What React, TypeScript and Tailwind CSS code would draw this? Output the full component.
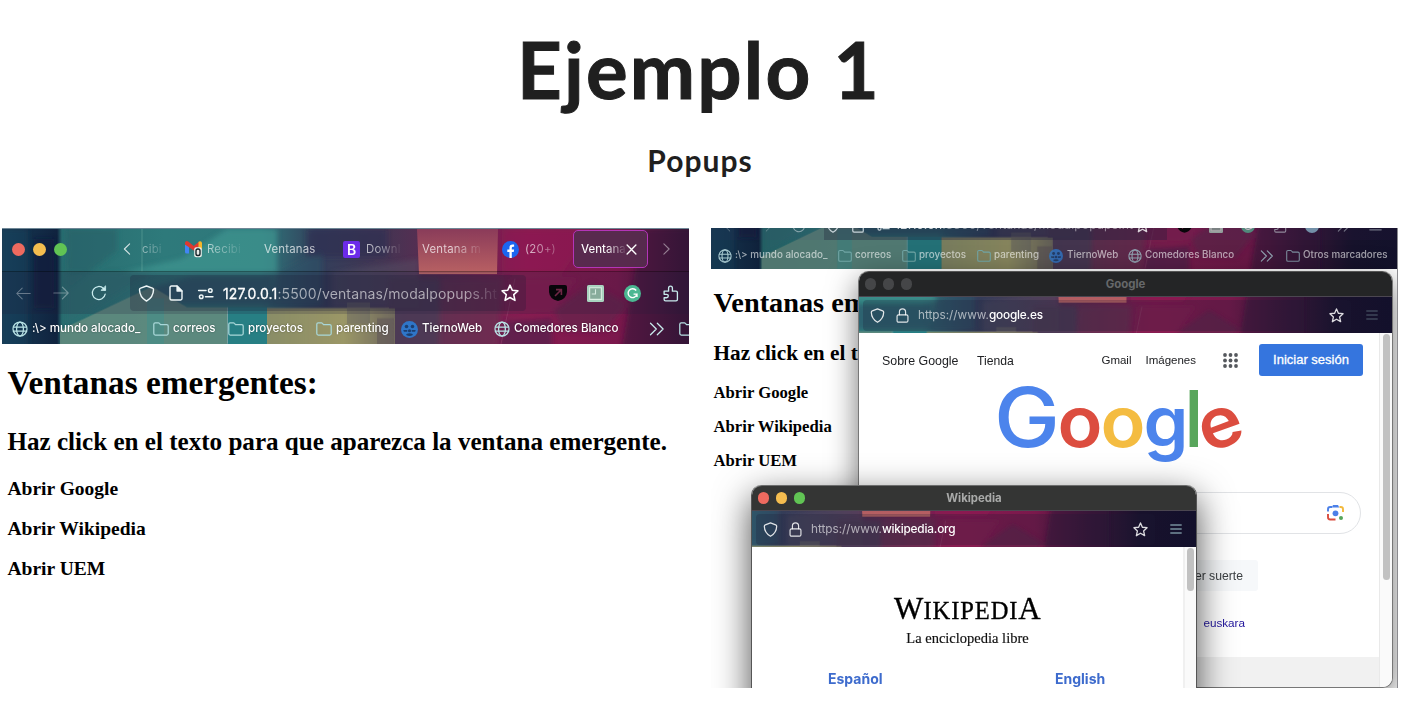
import React from "react";

type IconProps = { className?: string };

const inter = "font-['Inter',sans-serif]";

/* Painted wallpaper behind the browser chrome; `view` selects the visible part. */
function Wallpaper({ view, id }: { view: string; id: string }) {
  return (
    <svg className="absolute inset-0 h-full w-full" viewBox={view} preserveAspectRatio="none" aria-hidden="true">
      <defs>
        <linearGradient id={id + "base"} x1="0" x2="810" y1="0" y2="0" gradientUnits="userSpaceOnUse">
          <stop offset="0" stopColor="#173b55" />
          <stop offset=".068" stopColor="#10233f" />
          <stop offset=".074" stopColor="#286c6f" />
          <stop offset=".2" stopColor="#2e7a7b" />
          <stop offset=".32" stopColor="#2f777b" />
          <stop offset=".39" stopColor="#333f5b" />
          <stop offset=".47" stopColor="#433553" />
          <stop offset=".58" stopColor="#6f2450" />
          <stop offset=".65" stopColor="#861b50" />
          <stop offset=".76" stopColor="#7b184c" />
          <stop offset=".84" stopColor="#3c1538" />
          <stop offset=".91" stopColor="#18112c" />
          <stop offset="1" stopColor="#12102b" />
        </linearGradient>
        <linearGradient id={id + "olive"} x1="0" x2="1" y1="0" y2="0">
          <stop offset="0" stopColor="#8f8f66" />
          <stop offset=".6" stopColor="#a09c68" />
          <stop offset="1" stopColor="#716b5d" />
        </linearGradient>
        <linearGradient id={id + "coral"} x1="0" x2="0" y1="0" y2="1">
          <stop offset="0" stopColor="#8c3d5a" />
          <stop offset="1" stopColor="#bd6564" />
        </linearGradient>
        <filter id={id + "soft"} x="-10%" y="-10%" width="120%" height="120%">
          <feGaussianBlur stdDeviation="2.6" />
        </filter>
        <filter id={id + "edge"} x="-10%" y="-10%" width="120%" height="120%">
          <feGaussianBlur stdDeviation=".7" />
        </filter>
      </defs>
      <rect x="-10" y="-10" width="840" height="140" fill={"url(#" + id + "base)"} />
      <g filter={"url(#" + id + "soft)"}>
        <path d="M0 0H26V130H0Z" fill="#19445f" opacity=".45" />
        <path d="M32 10H52V80H32Z" fill="#0e1d3b" opacity=".7" />
        <path d="M64 0H115V22L66 60Z" fill="#245f68" opacity=".55" />
        <path d="M225 0H275V44H120L180 30Z" fill="#3f9690" opacity=".7" />
        <path d="M150 44L100 75 64 98V44Z" fill="#2c6c70" opacity=".6" />
        <path d="M145 60V76H270V48H190Z" fill="#2c5c6c" opacity=".75" />
        <path d="M320 22V78H268L276 44Z" fill="#2f5468" opacity=".6" />
        <path d="M305 0H385V28H305Z" fill="#2f3153" opacity=".7" />
        <path d="M330 44L417 30V80H330Z" fill="#575667" opacity=".4" />
        <path d="M387 50H438V125H387Z" fill="#4c3c55" opacity=".9" />
        <path d="M440 50H500L495 125H435Z" fill="#683553" opacity=".55" />
        <path d="M500 0H590L560 45H500Z" fill="#951b53" opacity=".45" />
        <path d="M508 50H575L550 85 504 88Z" fill="#8a1b51" opacity=".6" />
        <path d="M500 94L550 90V125H497Z" fill="#5a234d" opacity=".8" />
        <path d="M590 54L625 76 604 103H560L552 82Z" fill="#5c244a" opacity=".55" />
        <path d="M640 0H700V120H620Z" fill="#32153a" opacity=".5" />
      </g>
      <g filter={"url(#" + id + "edge)"}>
        <path d="M66 98L150 58 185 79H225V120H58V102Z" fill="#688d80" opacity=".8" />
        <path d="M145 70H162V120H145Z" fill="#3f908b" opacity=".5" />
        <path d="M226 79H265V125H226Z" fill="#297f85" opacity=".95" />
        <rect x="265" y="80" width="128" height="40" fill={"url(#" + id + "olive)"} opacity=".95" />
        <path d="M345 74H368V96H345Z" fill="#6a6762" opacity=".5" />
        <path d="M375 90H392V120H375Z" fill="#5e5457" opacity=".55" />
      </g>
      <path d="M415 0H496L495 45.500H417Z" fill={"url(#" + id + "coral)"} opacity=".95" />
      <path d="M417 45H495" stroke="#d37b70" opacity=".6" />
      <path d="M140 0V43" stroke="#7db9ad" opacity=".4" />
      <path d="M225.500 79V116" stroke="#b3c5c3" opacity=".55" />
      <path d="M265 79.500H387" stroke="#bdb682" opacity=".35" />
      <path d="M513 50 499 116" stroke="#a3577c" opacity=".4" />
    </svg>
  );
}

const Svg = ({ className = "", children, box = "0 0 16 16" }: IconProps & { children: React.ReactNode; box?: string }) => (
  <svg className={"block shrink-0 " + className} viewBox={box} fill="none" stroke="currentColor" strokeWidth="1.25" strokeLinecap="round" strokeLinejoin="round">
    {children}
  </svg>
);

const GlobeIcon = ({ className }: IconProps) => (
  <Svg className={className}>
    <circle cx="8" cy="8" r="7" />
    <ellipse cx="8" cy="8" rx="3.4" ry="7" />
    <path d="M1.4 6H14.6M1.4 10.2H14.6" />
  </Svg>
);
const FolderIcon = ({ className }: IconProps) => (
  <Svg className={className}>
    <path d="M.8 3.2Q.8 1.8 2.2 1.8H5.4Q6 1.8 6.4 2.3L7.5 3.6H13.7Q15.2 3.6 15.2 5V12.5Q15.2 14 13.7 14H2.3Q.8 14 .8 12.5Z" />
  </Svg>
);
const ShieldIcon = ({ className }: IconProps) => (
  <Svg className={className}>
    <path d="M8 .9 13.5 3Q14.6 3.4 14.6 4.5 14.4 11.6 8 15.2 1.6 11.6 1.4 4.5 1.4 3.4 2.5 3Z" strokeWidth="1.35" />
  </Svg>
);
const LockIcon = ({ className }: IconProps) => (
  <Svg className={className}>
    <rect x="2.2" y="7.3" width="11.6" height="7.8" rx="1.6" />
    <path d="M4.7 7.2V4.2a3.3 3.3 0 0 1 6.6 0v3" />
  </Svg>
);
const StarIcon = ({ className }: IconProps) => (
  <Svg className={className}>
    <path d="M8 1 10 5.6 15 6.1 11.3 9.5 12.4 14.6 8 12 3.6 14.6 4.7 9.5 1 6.1 6 5.6Z" strokeWidth="1.4" />
  </Svg>
);
const PageIcon = ({ className }: IconProps) => (
  <Svg className={className}>
    <path d="M3.5 1H9L14 6V13.6Q14 15 12.6 15H3.5Q2 15 2 13.5V2.5Q2 1 3.5 1Z" strokeWidth="1.4" />
    <path d="M9 1V6H14Z" fill="currentColor" />
  </Svg>
);
const PermsIcon = ({ className }: IconProps) => (
  <Svg className={className}>
    <path d="M1.500 5.200H8.500M8 11H15" strokeWidth="1.4" />
    <circle cx="12.5" cy="5.200" r="1.700" strokeWidth="1.4" />
    <circle cx="4" cy="11" r="1.700" strokeWidth="1.4" />
  </Svg>
);
const ArrowIcon = ({ className }: IconProps) => (
  <Svg className={className}>
    <path d="M.8 8H15.2M9.4 2.2 15.2 8 9.4 13.8" strokeWidth="1.1" />
  </Svg>
);
const ReloadIcon = ({ className }: IconProps) => (
  <Svg className={className}>
    <path d="M14.2 9.2A6.5 6.5 0 1 1 12.5 3.5L14 5" />
    <path d="M14.6 1.2V5.4H10.3Z" fill="currentColor" strokeWidth=".8" />
  </Svg>
);
const ChevronIcon = ({ className }: IconProps) => (
  <Svg className={className} box="0 0 8 16">
    <path d="M1 2.2 7 8 1 13.8" />
  </Svg>
);
const DoubleChevronIcon = ({ className }: IconProps) => (
  <Svg className={className}>
    <path d="M1.5 2.2 7.3 8 1.5 13.8M8.3 2.2 14.1 8 8.3 13.8" />
  </Svg>
);
const PuzzleIcon = ({ className }: IconProps) => (
  <Svg className={className}>
    <path d="M2 5.800H6.200V3Q6.200 1 8 1T9.800 3V5.800H13.200Q14.500 5.800 14.500 7.100V13.700Q14.500 15 13.200 15H3.300Q2 15 2 13.700V12H4.200Q5.900 12 5.900 10.400T4.200 8.800H2Z" />
  </Svg>
);
const MenuIcon = ({ className }: IconProps) => (
  <Svg className={className} box="0 0 12 12">
    <path d="M.7 2H11.3M.7 6H11.3M.7 10H11.3" strokeWidth="1" />
  </Svg>
);
const PeopleIcon = ({ className }: IconProps) => (
  <svg className={"block shrink-0 " + className} viewBox="0 0 16 16">
    <circle cx="8" cy="8" r="8" fill="#2f76c8" />
    <g fill="#1c3f70">
      <circle cx="5.200" cy="5.200" r="1.700" />
      <circle cx="10.800" cy="5.200" r="1.700" />
      <path d="M2.300 8.400H6Q5.600 9.400 6 10.200H2.800Q2.200 9.400 2.300 8.400ZM10 8.400H13.700Q13.800 9.400 13.200 10.200H10Q10.400 9.400 10 8.400Z" />
      <circle cx="8" cy="9.200" r="1.500" />
      <path d="M4.800 13.200Q5 11.600 8 11.600T11.200 13.200Q8 14.800 4.800 13.200Z" />
    </g>
  </svg>
);
const PocketIcon = ({ className }: IconProps) => (
  <svg className={"block shrink-0 " + className} viewBox="0 0 18 16">
    <path d="M2 0H16Q18 0 18 2V7Q17.5 14 9 16 .5 14 0 7V2Q0 0 2 0Z" fill="#08060a" />
    <path d="M6 11 12 5M7 4.6H12.4V10" fill="none" stroke="#702746" strokeWidth="1.6" />
  </svg>
);
const NoteIcon = ({ className }: IconProps) => (
  <svg className={"block shrink-0 " + className} viewBox="0 0 16 16">
    <rect width="16" height="16" rx="1.5" fill="#a9d3bf" />
    <path d="M2.500 2.500H13.500V13.500H2.500Z" fill="#87ac9b" stroke="#dcefe4" />
    <path d="M8 4V8.500H4.500" fill="none" stroke="#d5eadf" />
  </svg>
);
const GrammarIcon = ({ className }: IconProps) => (
  <svg className={"block shrink-0 " + className} viewBox="0 0 16 16">
    <circle cx="8" cy="8" r="8" fill="#4bb792" />
    <path d="M11.5 5.2A4.2 4.2 0 1 0 12.2 8.6H9M12.2 8.6V11.2" fill="none" stroke="#fff" strokeWidth="1.3" />
  </svg>
);
const MailIcon = ({ className }: IconProps) => (
  <svg className={"block shrink-0 " + className} viewBox="0 0 18 17">
    <path d="M0 3.4V11Q0 12.5 1.5 12.5H4V5Z" fill="#4285f4" />
    <path d="M13.5 5 17 3.4V8H13.5Z" fill="#f4b62a" />
    <path d="M0 3.6V1.6Q.8-.8 3.2.5L8.7 4.9 14.2.5V5L8.7 9.6Z" fill="#e0392f" />
    <path d="M14 .6Q16.5-.7 17 1.8V4L13.5 6.3V1Z" fill="#f4b62a" />
    <rect x="9.2" y="6.2" width="7.6" height="10" rx="2" fill="#e9ece9" />
    <rect x="11" y="8" width="4" height="6.5" rx="1.8" fill="none" stroke="#16252a" strokeWidth="1.4" />
  </svg>
);
const SocialIcon = ({ className }: IconProps) => (
  <svg className={"block shrink-0 " + className} viewBox="0 0 16 16">
    <circle cx="8" cy="8" r="8" fill="#1b66f0" />
    <path d="M7 16V10.3H5V8H7V6.3Q7 3.3 10 3.3H11.4V5.3H10.4Q9.2 5.3 9.2 6.6V8H11.4L11 10.3H9.2V16Z" fill="#fff" />
  </svg>
);
const LensIcon = ({ className }: IconProps) => (
  <svg className={"block shrink-0 " + className} viewBox="0 0 17 17" fill="none" strokeWidth="1.9">
    <path d="M1 7.5V5.2Q1 3 3.2 3H5" stroke="#4c80e8" />
    <path d="M4.8 3.4 6 1H11L12.2 3.4Z" fill="#4c80e8" />
    <path d="M12.5 3H13.8Q16 3 16 5.2V8" stroke="#f3b93c" />
    <path d="M1 10V13.3Q1 15.5 3.2 15.5H8.5" stroke="#d94c3e" />
    <circle cx="8.5" cy="9.3" r="2.9" fill="#4c80e8" />
    <circle cx="14" cy="14" r="2" fill="#55a55b" />
  </svg>
);
const AppsIcon = ({ className }: IconProps) => (
  <svg className={"block shrink-0 " + className} viewBox="0 0 15 15" fill="#55585d">
    {[2, 7.5, 13].map((y) => [2, 7.5, 13].map((x) => <circle key={x + "-" + y} cx={x} cy={y} r="1.9" />))}
  </svg>
);

function MainChrome() {
  return (
    <div className={"relative h-[116px] w-[687px] overflow-hidden border-t border-[#6f8796] " + inter}>
      <Wallpaper view="0 0 687 116" id="main" />
      <div className="relative flex h-[43px] items-center border-b border-black/35 pb-[2px] pl-[10px] text-[11.4px] tracking-[0.2px] text-white/60">
        <div className="flex w-[111px] shrink-0 gap-[8px]">
          <span className="size-[13px] rounded-full bg-[#ee6a5f]" />
          <span className="size-[13px] rounded-full bg-[#f5bd4f]" />
          <span className="size-[13px] rounded-full bg-[#61c454]" />
        </div>
        <ChevronIcon className="mr-[9px] h-[14px] w-[8px] rotate-180 text-white/80" />
        <span className="mt-[2px] w-[45px] shrink-0 overflow-hidden bg-gradient-to-r from-white/55 to-white/10 bg-[length:24px_100%] bg-no-repeat bg-clip-text pl-[2px] text-transparent">cibi</span>
        <MailIcon className="h-[17px] w-[18px]" />
        <span className="mt-[2px] ml-[4px] w-[57px] shrink-0 bg-gradient-to-r from-white/65 to-white/5 bg-[length:36px_100%] bg-no-repeat bg-clip-text text-transparent">Recibi</span>
        <span className="mt-[2px] w-[79px] shrink-0 text-white/70">Ventanas</span>
        <span className="flex size-[17px] shrink-0 items-center justify-center rounded-[2px] bg-[#6c2be9] text-[14px] font-semibold tracking-normal text-white">B</span>
        <span className="mt-[2px] ml-[6px] w-[56px] shrink-0 bg-gradient-to-r from-white/65 from-30% to-white/5 bg-[length:35px_100%] bg-no-repeat bg-clip-text text-transparent">Downl</span>
        <span className="mt-[2px] w-[80px] shrink-0 bg-gradient-to-r from-white/75 from-50% to-white/5 bg-[length:60px_100%] bg-no-repeat bg-clip-text text-transparent">Ventana m</span>
        <SocialIcon className="size-[17px]" />
        <span className="mt-[2px] ml-[6px] w-[48px] shrink-0 bg-gradient-to-r from-white/75 to-white/25 bg-[length:34px_100%] bg-no-repeat bg-clip-text text-transparent">(20+)</span>
        <span className="flex h-[38px] w-[75px] shrink-0 items-center rounded-[5px] border border-[#b435b8] bg-[#562b4e]/95 pl-[7px] pt-[2px]">
          <span className="w-[45px] overflow-hidden whitespace-nowrap bg-gradient-to-r from-white from-55% to-white/5 bg-clip-text font-medium tracking-[0px] text-transparent">Ventana</span>
          <Svg className="-mt-[2px] size-[11px] text-white" box="0 0 10 10">
            <path d="M1 1 9 9M9 1 1 9" />
          </Svg>
        </span>
        <ChevronIcon className="ml-[14px] h-[14px] w-[9px] text-white/45" />
      </div>
      <div className="relative flex h-[42px] items-center bg-[#241f3c]/20 pl-[14px] text-[#c9ecee]">
        <ArrowIcon className="mr-[22px] size-[15px] rotate-180 text-white/35" />
        <ArrowIcon className="mr-[22px] size-[16px] text-white/35" />
        <ReloadIcon className="mr-[23px] size-[16px]" />
        <div className="flex h-[36px] w-[396px] shrink-0 items-center rounded-[4px] bg-[#1c1a35]/25 pl-[8px] text-[#eef6f7]">
          <ShieldIcon className="mr-[13px] size-[17px]" />
          <PageIcon className="mr-[13px] size-[16px]" />
          <PermsIcon className="mr-[9px] size-[17px]" />
          <span className="w-[274px] shrink-0 overflow-hidden whitespace-nowrap text-[14px] tracking-[0.13px]">
            <span className="text-white [-webkit-text-stroke:0.3px_white]">127.0.0.1</span>
            <span className="bg-gradient-to-r from-white/60 from-85% to-white/5 bg-clip-text text-transparent">:5500/ventanas/modalpopups.ht</span>
          </span>
          <StarIcon className="ml-[4px] size-[18px] text-white" />
        </div>
        <PocketIcon className="ml-[23px] h-[16px] w-[18px]" />
        <NoteIcon className="ml-[20px] size-[17px]" />
        <GrammarIcon className="ml-[20px] size-[17px]" />
        <PuzzleIcon className="ml-[21px] size-[17px]" />
      </div>
      <div className="relative flex h-[30px] items-center pl-[10px] text-[11.6px] font-medium tracking-[-0.03px] whitespace-nowrap text-white [text-shadow:0_0_2px_rgba(0,0,0,0.4)]">
        <GlobeIcon className="mr-[4px] size-[16px] text-[#b9e4e6]" />
        <span className="w-[121px] shrink-0">:\&gt; mundo alocado_</span>
        <FolderIcon className="mr-[4px] size-[16px] text-[#a9d7d8]" />
        <span className="w-[55px] shrink-0">correos</span>
        <FolderIcon className="mr-[4px] size-[16px] text-[#a9d7d8]" />
        <span className="w-[68px] shrink-0">proyectos</span>
        <FolderIcon className="mr-[4px] size-[16px] text-[#a9d7d8]" />
        <span className="w-[65px] shrink-0">parenting</span>
        <PeopleIcon className="mr-[4px] size-[17px]" />
        <span className="w-[72px] shrink-0">TiernoWeb</span>
        <GlobeIcon className="mr-[4px] size-[16px] text-[#b9e4e6]" />
        <span className="w-[135px] shrink-0">Comedores Blanco</span>
        <DoubleChevronIcon className="mr-[14px] size-[16px] text-[#c9ecee]" />
        <FolderIcon className="size-[16px] text-[#b9e4e6]" />
      </div>
    </div>
  );
}

function BackgroundChrome() {
  return (
    <div className={"relative h-[41px] w-[687px] overflow-hidden " + inter}>
      <Wallpaper view="0 69 790 47" id="back" />
      <div className="relative -mt-[17px] flex h-[29px] items-center bg-[#241f3c]/20 pl-[13px] text-[#c8d4da]">
        <ArrowIcon className="mr-[20px] size-[14px] rotate-180 opacity-40" />
        <ArrowIcon className="mr-[20px] size-[14px] opacity-40" />
        <ReloadIcon className="mr-[18px] size-[14px] opacity-60" />
        <div className="flex h-full w-[343px] shrink-0 items-center bg-[#1c1a35]/30 pl-[2px]">
          <ShieldIcon className="mr-[11px] size-[14px]" />
          <PageIcon className="mr-[11px] size-[14px]" />
          <PermsIcon className="mr-[5px] size-[14px]" />
          <span className="w-[240px] shrink-0 overflow-hidden text-[12.2px] tracking-[0.1px] whitespace-nowrap">
            <span className="text-white/80">127.0.0.1</span>
            <span className="text-white/45">:5500/ventanas/modalpopups.ht</span>
          </span>
          <StarIcon className="size-[15px] text-white/80" />
        </div>
        <PocketIcon className="ml-[10px] h-[14px] w-[15px]" />
        <NoteIcon className="ml-[17px] size-[14px] opacity-70" />
        <GrammarIcon className="ml-[18px] size-[14px] opacity-70" />
        <PuzzleIcon className="ml-[18px] size-[14px] opacity-60" />
        <span className="ml-[18px] size-[14px] shrink-0 rounded-full bg-[#7390a8]" />
        <DoubleChevronIcon className="ml-[18px] size-[14px] opacity-50" />
        <MenuIcon className="ml-[18px] size-[13px] opacity-50" />
      </div>
      <div className="relative flex h-[31px] items-center bg-[#101828]/15 pl-[7px] text-[9.8px] font-medium tracking-[0.03px] whitespace-nowrap text-white/60">
        <GlobeIcon className="mr-[3px] size-[14px] text-[#a8c9d0]" />
        <span className="w-[103px] shrink-0">:\&gt; mundo alocado_</span>
        <FolderIcon className="mr-[3px] size-[14px] text-[#72a6a6]" />
        <span className="w-[47px] shrink-0">correos</span>
        <FolderIcon className="mr-[3px] size-[14px] text-[#72a6a6]" />
        <span className="w-[58px] shrink-0">proyectos</span>
        <FolderIcon className="mr-[3px] size-[14px] text-[#72a6a6]" />
        <span className="w-[55px] shrink-0">parenting</span>
        <PeopleIcon className="mr-[4px] size-[14px] opacity-80" />
        <span className="w-[61px] shrink-0">TiernoWeb</span>
        <GlobeIcon className="mr-[3px] size-[14px] text-[#92a4b2]" />
        <span className="w-[115px] shrink-0">Comedores Blanco</span>
        <DoubleChevronIcon className="mr-[12px] size-[14px] text-[#92a4b2]" />
        <FolderIcon className="mr-[3px] size-[14px] text-[#7c8d9e]" />
        <span className="shrink-0">Otros marcadores</span>
      </div>
    </div>
  );
}

type PopupBarProps = { view: string; id: string; host: string; title: string; active?: boolean };

function PopupBar({ view, id, host, title, active }: PopupBarProps) {
  return (
    <div className={inter}>
      <div className={"grid h-[25px] grid-cols-[60px_1fr_60px] items-center rounded-t-[10px] border-t px-[6px] " + (active ? "border-[#6c6d6d] bg-[#343534]" : "border-[#555] bg-[#242526]")}>
        <div className="flex gap-[6.5px]">
          <span className={"size-[11.3px] shrink-0 rounded-full " + (active ? "bg-[#ee6a5f]" : "bg-[#454648]")} />
          <span className={"size-[11.3px] shrink-0 rounded-full " + (active ? "bg-[#f5bd4f]" : "bg-[#454648]")} />
          <span className={"size-[11.3px] shrink-0 rounded-full " + (active ? "bg-[#61c454]" : "bg-[#454648]")} />
        </div>
        <div className={"pt-[1px] text-center text-[11.4px] font-bold " + (active ? "text-[#a9aaa9]" : "text-[#66686a]")}>{title}</div>
      </div>
      <div className="relative flex h-[37px] items-center border-t border-[#4b4650] pr-[14px] pl-[4px] text-white/85">
        <Wallpaper view={view} id={id} />
        <div className="relative flex h-[31px] flex-1 items-center rounded-[4px] bg-[#1c1a35]/25 pr-[7px] pl-[7px]">
          <ShieldIcon className="mr-[10px] size-[15px]" />
          <LockIcon className="mr-[8px] size-[15px]" />
          <span className="mt-[2px] flex-1 text-[11.8px] tracking-[-0.03px] text-white/60">
            https://www.<span className="font-medium tracking-[-0.18px] text-white">{host}</span>
          </span>
          <StarIcon className="size-[15px]" />
        </div>
        <MenuIcon className={"relative ml-[15px] size-[12px] " + (active ? "text-[#a7ced4]" : "text-[#536171]")} />
      </div>
    </div>
  );
}

function GoogleLogo() {
  return (
    <svg className="block h-[82px] w-[244px]" viewBox="0 0 244 82" fontFamily="Inter, sans-serif" fontWeight="500" aria-label="Google">
      <text x="-4" y="62" fontSize="82" fill="#4c84ec" textLength="66" lengthAdjust="spacingAndGlyphs">G</text>
      <text x="59.500" y="62" fontSize="70" fontWeight="600" fill="#dc4d3f" textLength="45" lengthAdjust="spacingAndGlyphs">o</text>
      <text x="102.500" y="62" fontSize="70" fontWeight="600" fill="#f4bc41" textLength="45" lengthAdjust="spacingAndGlyphs">o</text>
      <text x="145.500" y="62" fontSize="70" fontWeight="600" fill="#4c84ec" textLength="45" lengthAdjust="spacingAndGlyphs">g</text>
      <text x="186" y="61.5" fontSize="78" fill="#59a65c">l</text>
      <text x="201" y="62" fontSize="70" fontWeight="600" fill="#dc4d3f" textLength="44" lengthAdjust="spacingAndGlyphs" transform="rotate(-20 222.500 43)">e</text>
    </svg>
  );
}

function GoogleWindow() {
  return (
    <div className="absolute top-[43px] left-[147px] flex h-[417px] w-[535px] flex-col rounded-[10px] border-x border-b border-[#777] bg-white shadow-[0_10px_30px_rgba(0,0,0,0.55)]">
      <PopupBar view="187 39 614 42" id="goog" host="google.es" title="Google" />
      <div className="flex min-h-0 flex-1 font-['Liberation_Sans',sans-serif] text-[#202124]">
        <div className="flex flex-1 flex-col overflow-hidden">
          <div className="flex h-[52px] items-center pt-[2px] pr-[16px] pl-[23px]">
            <span className="w-[95px] shrink-0 pt-[2px] text-[12.4px]">Sobre Google</span>
            <span className="flex-1 pt-[2px] text-[12.2px]">Tienda</span>
            <span className="mr-[14px] pt-[2px] text-[11.5px]">Gmail</span>
            <span className="mr-[27px] pt-[2px] text-[11.5px]">Imágenes</span>
            <AppsIcon className="mr-[21px] size-[15px]" />
            <span className="flex h-[32px] w-[104px] shrink-0 items-center justify-center rounded-[3px] bg-[#3575de] text-[13px] text-white [-webkit-text-stroke:0.3px_white]">Iniciar sesión</span>
          </div>
          <div className="pl-[139px]">
            <GoogleLogo />
          </div>
          <div className="mt-[25px] mr-[18px] ml-[18px] flex h-[42px] shrink-0 items-center justify-end rounded-full border border-[#e1e3e6] pr-[16px] pb-[2px]">
            <LensIcon className="size-[17px]" />
          </div>
          <div className="mt-[26px] flex justify-end pr-[121px]">
            <span className="flex h-[31px] items-center rounded-[3px] bg-[#f6f8fa] px-[15px] pt-[2px] text-[12.2px] text-[#3c4043]">Voy a tener suerte</span>
          </div>
          <div className="mt-[24px] flex justify-end pr-[134px] text-[11.7px] leading-[16px] text-[#20149c]">euskara</div>
          <div className="mt-[26px] flex-1 rounded-bl-[9px] bg-[#f1f1f1]" />
        </div>
        <div className="w-[13px] shrink-0 rounded-br-[9px] border-l border-[#e9e9e9] bg-[#fafafa] pt-[1px] pl-[3px]">
          <div className="h-[246px] w-[7px] rounded-full bg-[#c1c1c1]" />
        </div>
      </div>
    </div>
  );
}

function WikipediaWindow() {
  return (
    <div className="absolute top-[257px] left-[40px] flex h-[240px] w-[446px] flex-col rounded-[10px] border-x border-[#555] bg-white shadow-[0_12px_36px_rgba(0,0,0,0.7)]">
      <PopupBar view="290 39 511 42" id="wiki" host="wikipedia.org" title="Wikipedia" active />
      <div className="flex min-h-0 flex-1">
        <div className="flex flex-1 flex-col items-center">
          <div className="mt-[44px] font-['Liberation_Serif',serif] text-[31px] leading-[36px] tracking-[0.3px] whitespace-nowrap text-black [-webkit-text-stroke:0.35px_black]">
            W<span className="text-[24.5px] tracking-[0.9px]">IKIPEDI</span>A
          </div>
          <div className="font-['Liberation_Serif',serif] text-[14.5px] leading-[18px] text-[#111] [-webkit-text-stroke:0.15px_black]">La enciclopedia libre</div>
          <div className={"mt-[22px] flex w-full pl-[76px] text-[14px] leading-[20px] font-bold text-[#3d6bcd] " + inter}>
            <span className="w-[227px]">Español</span>
            <span>English</span>
          </div>
        </div>
        <div className="w-[13px] shrink-0 border-l-2 border-[#f0f0f0] bg-[#fafafa] pt-[1px] pl-[2px]">
          <div className="h-[43px] w-[7px] rounded-full bg-[#c1c1c1]" />
        </div>
      </div>
    </div>
  );
}

export default function App() {
  return (
    <main className="h-[702px] w-[1410px] overflow-hidden bg-white">
      <header className="flex h-[228px] flex-col items-center font-['Lato',sans-serif] font-bold text-[#1f1f1f]">
        <h1 className="mt-[20px] mr-[12px] text-[78px] leading-[98px] tracking-[2.2px] [-webkit-text-stroke:1px_#1f1f1f]">Ejemplo 1</h1>
        <h2 className="mt-[24px] mr-[10px] text-[30px] leading-[36px] tracking-[1px]">Popups</h2>
      </header>
      <div className="flex gap-[22px] pl-[2px]">
        <section className="h-[460px] w-[687px] shrink-0">
          <MainChrome />
          <div className="pt-[19px] pl-[5.500px] font-['Liberation_Serif',serif] font-bold text-black">
            <h1 className="text-[33.3px] leading-[40px]">Ventanas emergentes:</h1>
            <h2 className="mt-[24px] text-[25.1px] leading-[30px] whitespace-nowrap">Haz click en el texto para que aparezca la ventana emergente.</h2>
            <div className="mt-[19.500px] flex flex-col gap-[16px] text-[19.5px] leading-[24px]">
              <h3>Abrir Google</h3>
              <h3>Abrir Wikipedia</h3>
              <h3>Abrir UEM</h3>
            </div>
          </div>
        </section>
        <section className="relative h-[460px] w-[687px] shrink-0 overflow-hidden border-r border-[#8b8b8f]">
          <BackgroundChrome />
          <div className="pt-[17px] pl-[2.500px] font-['Liberation_Serif',serif] font-bold whitespace-nowrap text-black">
            <h1 className="text-[28.3px] leading-[34px]">Ventanas emergentes:</h1>
            <h2 className="mt-[20px] text-[21.3px] leading-[26px]">Haz click en el texto para que aparezca la ventana emergente.</h2>
            <div className="mt-[17px] flex flex-col gap-[14px] text-[16.7px] leading-[20px]">
              <h3>Abrir Google</h3>
              <h3>Abrir Wikipedia</h3>
              <h3>Abrir UEM</h3>
            </div>
          </div>
          <GoogleWindow />
          <WikipediaWindow />
        </section>
      </div>
    </main>
  );
}
